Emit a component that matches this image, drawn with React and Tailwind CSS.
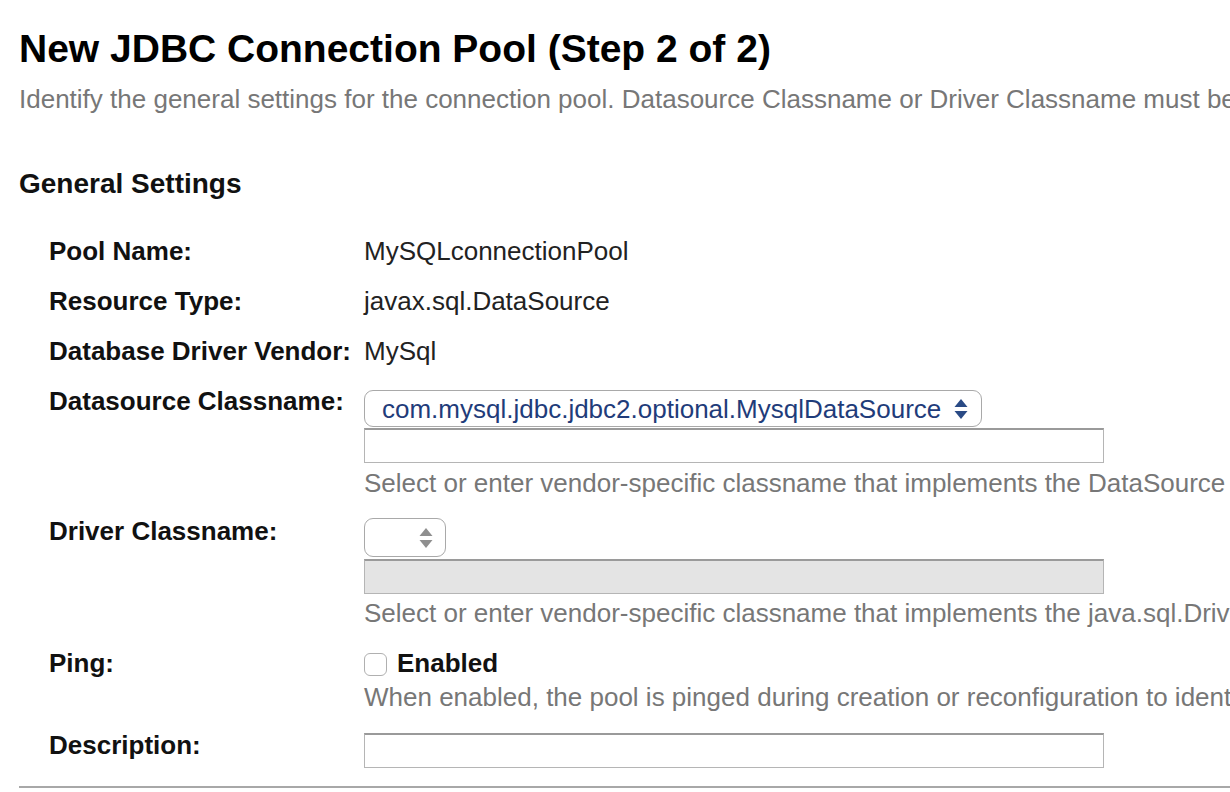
import React from 'react';

const font = { fontFamily: '"Liberation Sans", Arial, Helvetica, sans-serif' };

// up/down arrows of a native mac select
const SelectArrows = ({ color = '#2a4a85' }) => (
  <svg width="14" height="24" viewBox="0 0 14 24" aria-hidden>
    <path d="M7 2 L13.5 10 H0.5 Z" fill={color} />
    <path d="M7 22 L13.5 14 H0.5 Z" fill={color} />
  </svg>
);

const Row = ({ label, children, className = '' }) => (
  <div className={`flex items-start ${className}`}>
    <div className="w-[364px] shrink-0 pl-[49px] font-bold text-[26px] leading-[30px] text-[#111] whitespace-nowrap">{label}</div>
    <div className="flex-1 min-w-0">{children}</div>
  </div>
);

const Value = ({ children }) => (
  <div className="text-[26px] leading-[30px] text-[#222] whitespace-nowrap">{children}</div>
);

const Help = ({ children }) => (
  <div className="whitespace-nowrap text-[26px] leading-[30px] text-[#777]">{children}</div>
);

const TextBox = ({ disabled }) => (
  <div
    className={`w-[740px] h-[35px] border border-[#b5b5b5] border-t-2 border-t-[#9a9a9a] ${disabled ? 'bg-[#e4e4e4]' : 'bg-white'}`}
  />
);

export default function App() {
  return (
    <div className="w-[1230px] h-[792px] overflow-hidden bg-white" style={font}>
      <div className="pt-[26px] pl-[19px]">
        <h1 className="text-[39px] leading-[46px] font-bold text-black whitespace-nowrap">
          New JDBC Connection Pool (Step 2 of 2)
        </h1>
        <p className="mt-[12px] whitespace-nowrap text-[26px] leading-[30px] text-[#777]">
          Identify the general settings for the connection pool. Datasource Classname or Driver Classname must be specified to save the connection pool.
        </p>
        <h2 className="mt-[53px] text-[28px] leading-[34px] font-bold text-[#111]">General Settings</h2>
      </div>

      <div className="mt-[35px] flex flex-col">
        <Row label="Pool Name:">
          <Value>MySQLconnectionPool</Value>
        </Row>
        <Row label="Resource Type:" className="mt-[20px]">
          <Value>javax.sql.DataSource</Value>
        </Row>
        <Row label="Database Driver Vendor:" className="mt-[20px]">
          <Value>MySql</Value>
        </Row>

        <Row label="Datasource Classname:" className="mt-[20px]">
          <div className="pt-[4px]">
            <div className="w-[618px] h-[37px] rounded-[9px] border border-[#a9a9a9] bg-white flex items-center justify-between pl-[17px] pr-[13px]">
              <span className="text-[26px] leading-[30px] text-[#1f3c7a] whitespace-nowrap">com.mysql.jdbc.jdbc2.optional.MysqlDataSource</span>
              <SelectArrows />
            </div>
            <div className="mt-[1px]">
              <TextBox />
            </div>
            <div className="mt-[5px]">
              <Help>Select or enter vendor-specific classname that implements the DataSource and/or XADataSource APIs</Help>
            </div>
          </div>
        </Row>

        <Row label="Driver Classname:" className="mt-[18px]">
          <div className="pt-[2px]">
            <div className="w-[82px] h-[39px] rounded-[9px] border border-[#a9a9a9] bg-white flex items-center justify-end pr-[12px]">
              <SelectArrows color="#8f8f8f" />
            </div>
            <div className="mt-[2px]">
              <TextBox disabled />
            </div>
            <div className="mt-[4px]">
              <Help>Select or enter vendor-specific classname that implements the java.sql.Driver interface.</Help>
            </div>
          </div>
        </Row>

        <Row label="Ping:" className="mt-[20px]">
          <div className="flex items-center h-[30px]">
            <div className="w-[23px] h-[23px] mt-[2px] rounded-[6px] border border-[#b0b0b0] bg-white" />
            <span className="ml-[10px] font-bold text-[26px] leading-[30px] text-[#111]">Enabled</span>
          </div>
          <div className="mt-[4px]">
            <Help>When enabled, the pool is pinged during creation or reconfiguration to identify and warn of any erroneous values for its attributes</Help>
          </div>
        </Row>

        <Row label="Description:" className="mt-[18px]">
          <div className="pt-[3px]">
            <TextBox />
          </div>
        </Row>
      </div>

      <div className="mt-[18px] ml-[19px] h-[2px] bg-[#a8a8a8]" />
    </div>
  );
}
